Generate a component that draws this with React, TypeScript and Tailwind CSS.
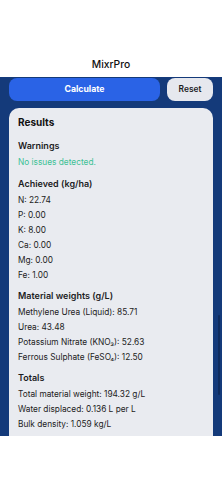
import React from 'react';

type Section = {
  title: string;
  lines: React.ReactNode[];
  mt: string;
};

const sections: Section[] = [
  {
    title: 'Achieved (kg/ha)',
    mt: 'mt-[5px]',
    lines: ['N: 22.74', 'P: 0.00', 'K: 8.00', 'Ca: 0.00', 'Mg: 0.00', 'Fe: 1.00'],
  },
  {
    title: 'Material weights (g/L)',
    mt: 'mt-[4px]',
    lines: [
      'Methylene Urea (Liquid): 85.71',
      'Urea: 43.48',
      'Potassium Nitrate (KNO₃): 52.63',
      'Ferrous Sulphate (FeSO₄): 12.50',
    ],
  },
  {
    title: 'Totals',
    mt: 'mt-[4px]',
    lines: ['Total material weight: 194.32 g/L', 'Water displaced: 0.136 L per L', 'Bulk density: 1.059 kg/L'],
  },
];

const SectionTitle = ({ children, className = '' }: { children: React.ReactNode; className?: string }) => (
  <div className={`text-[9px] leading-[17px] font-semibold text-[#1c1c1e] ${className}`}>{children}</div>
);

export default function App() {
  return (
    <div
      className="w-[222px] h-[480px] bg-white flex flex-col overflow-hidden"
      style={{ fontFamily: 'Inter, "Noto Sans", sans-serif' }}
    >
      <header className="h-[77px] shrink-0 flex items-end justify-center pb-[5px]">
        <span className="text-[10.3px] font-medium text-[#111]">MixrPro</span>
      </header>

      <main className="h-[359px] shrink-0 bg-[#143a7a] px-[9px] pt-[1px] overflow-hidden relative">
        <div className="flex gap-[7px] h-[23px]">
          <button className="flex-1 rounded-[8px] bg-[#2a63e6] text-white text-[8.7px] font-bold">
            Calculate
          </button>
          <button className="w-[46px] rounded-[8px] bg-[#e6e8ee] text-[#1c1c1e] text-[8.4px] font-semibold">
            Reset
          </button>
        </div>

        <section className="mt-[7px] rounded-[10px] bg-[#e9ebf0] px-[9px] pt-[4px] pb-[20px]">
          <div className="text-[10px] leading-[20px] font-bold text-[#111]">Results</div>

          <SectionTitle className="mt-[5px]">Warnings</SectionTitle>
          <div className="mt-[1px] text-[8.3px] leading-[15px] text-[#3cc195]">No issues detected.</div>

          {sections.map((s) => (
            <div key={s.title} className={s.mt}>
              <SectionTitle>{s.title}</SectionTitle>
              <div className="mt-[1px] flex flex-col">
                {s.lines.map((line, i) => (
                  <div key={i} className="text-[8.3px] leading-[15px] text-[#222]">
                    {line}
                  </div>
                ))}
              </div>
            </div>
          ))}
        </section>

        <div className="absolute right-[2px] top-[238px] w-[2px] h-[80px] rounded-full bg-[#0f2c5e]" />
      </main>

      <div className="flex-1 bg-white" />
    </div>
  );
}
